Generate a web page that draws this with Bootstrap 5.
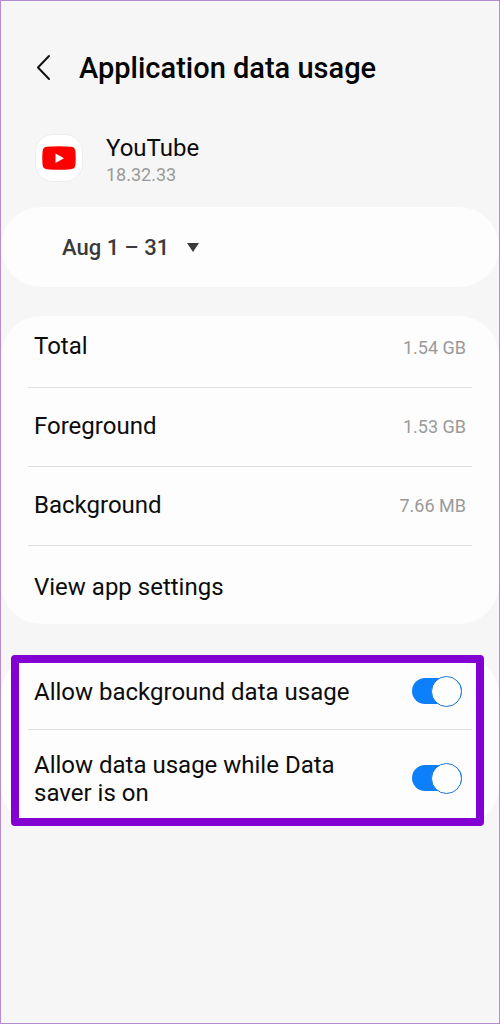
<!DOCTYPE html>
<html lang="en">
<head>
<meta charset="utf-8">
<meta name="viewport" content="width=device-width, initial-scale=1">
<title>Application data usage</title>
<link href="https://cdn.jsdelivr.net/npm/bootstrap@5.3.0/dist/css/bootstrap.min.css" rel="stylesheet">
<style>
  body { font-family: Roboto, sans-serif; font-size: 24px; line-height: 28px; color: #0c0c0c; background: #f6f6f6; border: 1px solid #b48fd0; }
  .topbar { padding: 48px 34px 0; gap: 26px; }
  .topbar h1 { font-size: 29px; line-height: 38px; font-weight: 500; color: #050505; }
  .back { width: 18px; height: 38px; }
  .app-info { padding: 47px 34px 0; gap: 23px; }
  .app-icon { width: 48px; height: 48px; border: 1px solid #eee; border-radius: 18px; background: #fff; }
  .version, .amount { font-size: 18px; color: #9a9a9a; }
  .version { line-height: 26px; }
  .panel { background: #fdfdfd; border-radius: 40px; }
  .period { height: 80px; margin-top: 19px; padding: 2px 0 0 61px; }
  .period select { appearance: none; border: 0; width: 138px; padding: 0; font-size: 22px; line-height: 28px; font-weight: 500; color: #3a3a3a;
    background: url("data:image/svg+xml,%3Csvg xmlns='http://www.w3.org/2000/svg' width='14' height='10'%3E%3Cpath d='M1 0h12L7 9z' fill='%233a3a3a'/%3E%3C/svg%3E") no-repeat right center; }
  .usage { margin-top: 29px; padding: 0 27px; }
  .line { padding: 0 6px; height: 79px; border-bottom: 1px solid #dfdfdf; }
  .line:first-child { height: 72px; padding-bottom: 8px; }
  .line:last-child { height: 78px; border: 0; padding-top: 6px; }
  .line-label { padding-bottom: 3px; }
  .toggles { margin-top: 31px; padding: 0 15px 0 10px; }
  .marked { border: 8px solid #8200d2; border-radius: 4px; padding: 0 4px 0 9px; }
  .toggle-row { padding: 0 10px 0 6px; }
  .toggle-row:first-child { height: 67px; border-bottom: 1px solid #dfdfdf; padding-bottom: 10px; }
  .toggle-row:last-child { height: 88px; padding-top: 8px; }
  .toggle-row label { max-width: 330px; padding-top: 2px; }
  .switch { appearance: none; width: 50px; height: 26px; margin: 0; border-radius: 13px; background: #bbb; display: flex; align-items: center; cursor: pointer; }
  .switch::before { content: ""; flex: none; width: 31px; height: 31px; border: 1px solid #999; border-radius: 50%; background: #fff; }
  .switch:checked { background: #0c80fb; justify-content: flex-end; }
  .switch:checked::before { border-color: #1878dc; }
</style>
</head>
<body class="min-vh-100">
<header class="topbar d-flex align-items-center">
  <button type="button" class="back btn p-0 border-0 d-flex align-items-center flex-shrink-0" aria-label="Back">
    <svg width="18" height="28" viewBox="0 0 18 28" fill="none" stroke="#111" stroke-width="2" stroke-linecap="round" stroke-linejoin="round"><path d="M14 2 3 13.500 14 25"/></svg>
  </button>
  <h1 class="m-0">Application data usage</h1>
</header>
<main>
  <section class="app-info d-flex align-items-start">
    <div class="app-icon d-flex align-items-center justify-content-center flex-shrink-0">
      <svg width="34" height="24" viewBox="0 0 34 24" aria-hidden="true"><path d="M5 .8Q17-.2 29 .8 33 1 33.400 5 34 12 33.400 19 33 23 29 23.200 17 24.200 5 23.200 1 23 .6 19 0 12 .6 5 1 1 5 .8Z" fill="#fe0000"/><path d="M13.500 7.500v9.500l8.500-4.700Z" fill="#fff"/></svg>
    </div>
    <div>
      <div>YouTube</div>
      <div class="version">18.32.33</div>
    </div>
  </section>
  <section class="panel period d-flex align-items-center">
    <select aria-label="Billing period"><option>Aug 1 – 31</option></select>
  </section>
  <section class="panel usage">
    <div class="line d-flex align-items-center justify-content-between"><span class="line-label">Total</span><span class="amount">1.54 GB</span></div>
    <div class="line d-flex align-items-center justify-content-between"><span class="line-label">Foreground</span><span class="amount">1.53 GB</span></div>
    <div class="line d-flex align-items-center justify-content-between"><span class="line-label">Background</span><span class="amount">7.66 MB</span></div>
    <div class="line d-flex align-items-center"><a href="#" class="line-label text-reset text-decoration-none">View app settings</a></div>
  </section>
  <section class="panel toggles">
    <div class="marked">
      <div class="toggle-row d-flex align-items-center justify-content-between">
        <label for="bg-data">Allow background data usage</label>
        <input class="switch flex-shrink-0" type="checkbox" role="switch" id="bg-data" checked>
      </div>
      <div class="toggle-row d-flex align-items-center justify-content-between">
        <label for="saver-data">Allow data usage while Data saver is on</label>
        <input class="switch flex-shrink-0" type="checkbox" role="switch" id="saver-data" checked>
      </div>
    </div>
  </section>
</main>
<script src="https://cdn.jsdelivr.net/npm/bootstrap@5.3.0/dist/js/bootstrap.bundle.min.js"></script>
</body>
</html>
